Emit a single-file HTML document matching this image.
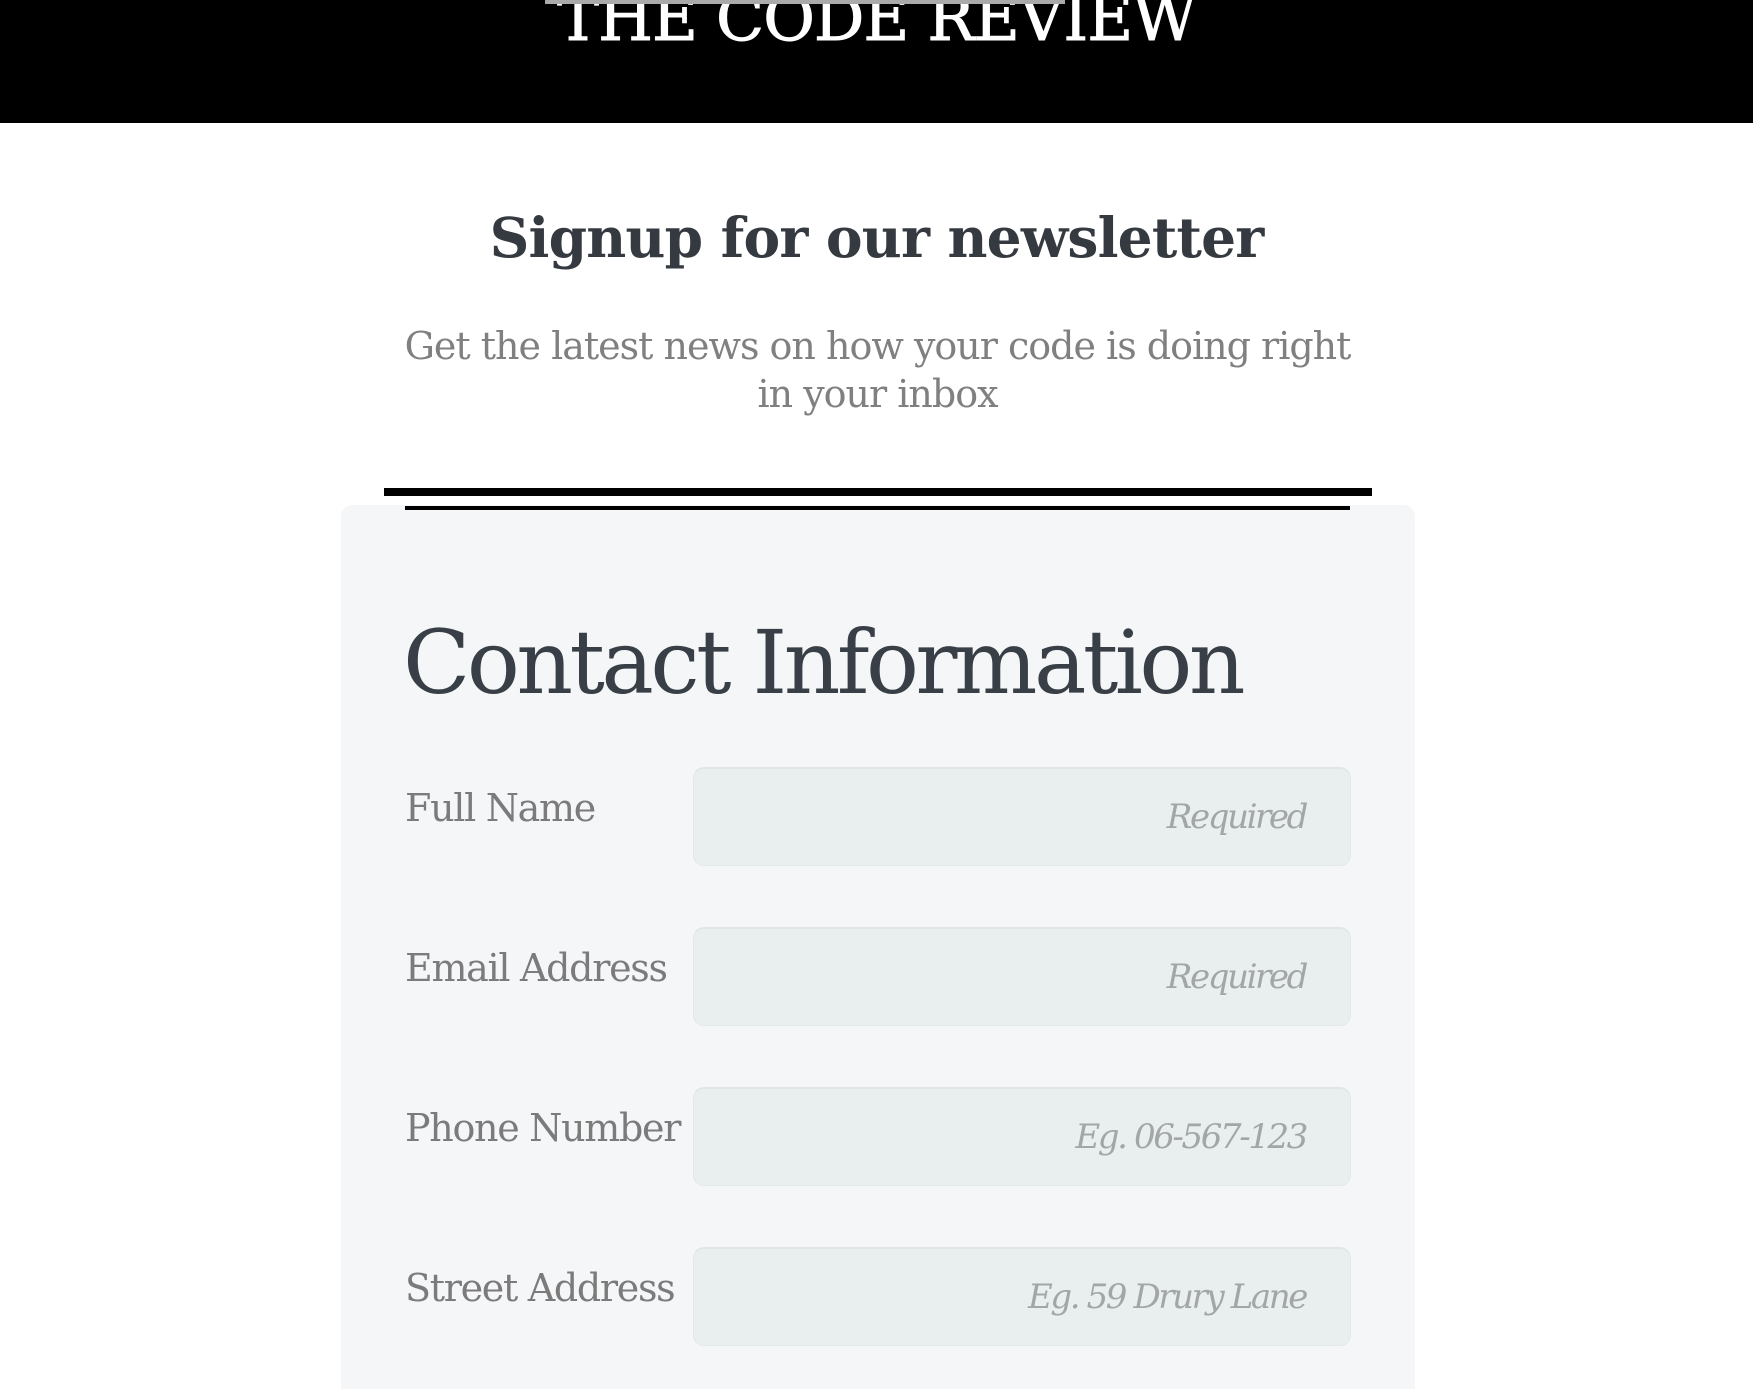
<!DOCTYPE html>
<html><head><meta charset="utf-8"><style>
html,body{margin:0;padding:0;width:1753px;height:1389px;overflow:hidden;background:#fff;font-family:"DejaVu Serif","Liberation Serif",serif;position:relative;}
.hdr{position:absolute;left:0;top:0;width:1753px;height:123px;background:#000;}
.bar{position:absolute;left:545px;top:0;width:520px;height:4px;background:#aaa;}
.title{position:absolute;left:0;width:1753px;text-align:center;top:-21px;font-size:63px;line-height:80px;color:#fff;letter-spacing:-1px;-webkit-text-stroke:1px #fff;}
h2{position:absolute;margin:0;left:0;width:1753px;text-align:center;top:203px;font-size:55px;line-height:70px;font-weight:bold;color:#343a40;letter-spacing:-0.8px;}
.sub{position:absolute;left:398px;width:959px;text-align:center;top:322px;font-size:38px;line-height:48px;color:#808080;letter-spacing:-1px;}
.l1{position:absolute;left:384px;top:488px;width:988px;height:8px;background:#000;}
.card{position:absolute;left:341px;top:505px;width:1074px;height:884px;background:#f5f6f8;border-radius:11px 11px 0 0;}
.l2{position:absolute;left:405px;top:506px;width:945px;height:4px;background:#000;}
.ci{position:absolute;left:403px;top:608px;font-size:88px;line-height:110px;color:#393f46;margin:0;font-weight:normal;letter-spacing:-3.5px;}
.lab{position:absolute;left:405px;font-size:38px;color:#7b7b7b;letter-spacing:-1.3px;line-height:50px;}
.inp{position:absolute;left:693px;width:658px;height:99px;background:#e9eeee;border:1px solid #e2e7e7;border-top:2px solid #e0e5e5;border-radius:11px;box-sizing:border-box;}
.ph{position:absolute;right:44px;top:23px;font-size:34px;line-height:50px;color:#a3a6a6;font-style:italic;letter-spacing:-2.4px;}
</style></head><body>
<div class="hdr"><div class="title">THE CODE REVIEW</div><div class="bar"></div></div>
<h2>Signup for our newsletter</h2>
<div class="sub">Get the latest news on how your code is doing right in your inbox</div>
<div class="l1"></div>
<div class="card"></div>
<div class="l2"></div>
<div class="ci">Contact Information</div>
<div class="lab" style="top:783px">Full Name</div>
<div class="inp" style="top:767px"><span class="ph">Required</span></div>
<div class="lab" style="top:943px">Email Address</div>
<div class="inp" style="top:927px"><span class="ph">Required</span></div>
<div class="lab" style="top:1103px">Phone Number</div>
<div class="inp" style="top:1087px"><span class="ph">Eg. 06-567-123</span></div>
<div class="lab" style="top:1263px">Street Address</div>
<div class="inp" style="top:1247px"><span class="ph">Eg. 59 Drury Lane</span></div>
</body></html>
